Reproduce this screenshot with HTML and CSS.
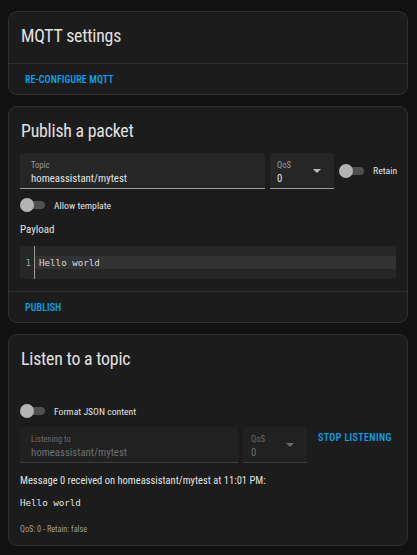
FILE: index.html
```html
<!DOCTYPE html>
<html>
<head>
<meta charset="utf-8">
<link rel="stylesheet" href="styles.css">
</head>
<body>
<div class="page">
  <div class="card">
    <div class="card-header first">MQTT settings</div>
    <div class="card-actions"><span class="btn">RE-CONFIGURE MQTT</span></div>
  </div>

  <div class="card">
    <div class="card-header">Publish a packet</div>
    <div class="card-content">
      <div class="field-row">
        <div class="field topic">
          <span class="label">Topic</span>
          <span class="value">homeassistant/mytest</span>
        </div>
        <div class="field qos">
          <span class="label">QoS</span>
          <span class="value">0</span>
          <span class="arrow"></span>
        </div>
        <span class="switch"><span class="thumb"></span></span>
        <span class="switch-label retain">Retain</span>
      </div>
      <div class="toggle-row">
        <span class="switch"><span class="thumb"></span></span>
        <span class="switch-label">Allow template</span>
      </div>
      <div class="payload-label">Payload</div>
      <div class="editor">
        <div class="gutter"><span class="ln">1</span></div>
        <div class="code"><div class="active-line">Hello world</div></div>
      </div>
    </div>
    <div class="card-actions"><span class="btn">PUBLISH</span></div>
  </div>

  <div class="card">
    <div class="card-header">Listen to a topic</div>
    <div class="card-content listen">
      <div class="toggle-row json">
        <span class="switch"><span class="thumb"></span></span>
        <span class="switch-label">Format JSON content</span>
      </div>
      <div class="field-row">
        <div class="field disabled listen-topic">
          <span class="label">Listening to</span>
          <span class="value">homeassistant/mytest</span>
        </div>
        <div class="field disabled qos2">
          <span class="label">QoS</span>
          <span class="value">0</span>
          <span class="arrow"></span>
        </div>
        <span class="btn stop">STOP LISTENING</span>
      </div>
      <div class="message">Message 0 received on homeassistant/mytest at 11:01 PM:</div>
      <div class="payload-out">Hello world</div>
      <div class="meta">QoS: 0 - Retain: false</div>
    </div>
  </div>
</div>
</body>
</html>
```

FILE: styles.css
```css
html, body {
  margin: 0;
  padding: 0;
  background: #111111;
  font-family: Roboto, "Noto Sans", sans-serif;
  font-stretch: 80%;
  color: #e1e1e1;
}
.page {
  padding: 11px 9px 0 8px;
  display: flex;
  flex-direction: column;
  gap: 11px;
}
.card {
  width: 400px;
  box-sizing: border-box;
  background: #1c1c1c;
  border: 1px solid #2f2f2f;
  border-radius: 9px;
}
.card-header {
  height: 46px;
  padding: 0 12px;
  display: flex;
  align-items: center;
  font-size: 17.8px;
  letter-spacing: -0.2px;
  color: #e1e1e1;
}
.card-header.first {
  height: 47px;
  padding-bottom: 4px;
}
.card-actions {
  border-top: 1px solid #2f2f2f;
  height: 30px;
  display: flex;
  align-items: center;
  padding: 0 16px;
}
.btn {
  color: #03a9f4;
  font-size: 10px;
  font-weight: 500;
  letter-spacing: 0.1px;
  white-space: nowrap;
}
.card-content {
  padding: 0 11px 12px 11px;
}
.field-row {
  display: flex;
  align-items: flex-start;
  gap: 5px;
}
.field {
  position: relative;
  flex: none;
  height: 35px;
  background: #262626;
  border-bottom: 1px solid #9a9a9a;
  border-radius: 3px 3px 0 0;
  padding: 0 11px;
  box-sizing: content-box;
  display: flex;
  flex-direction: column;
}
.field .label {
  font-size: 8.6px;
  color: #9e9e9e;
  margin-top: 7px;
  line-height: 11px;
}
.field .value {
  font-size: 10.8px;
  line-height: 15px;
  color: #e1e1e1;
}
.topic { width: 223px; }
.qos { width: 42px; padding-left: 7px; padding-right: 15px; }
.arrow {
  position: absolute;
  right: 13px;
  top: 16px;
  width: 0;
  height: 0;
  border-left: 4px solid transparent;
  border-right: 4px solid transparent;
  border-top: 4px solid #bdbdbd;
}
.switch {
  position: relative;
  width: 25px;
  height: 14px;
  flex: none;
  display: inline-block;
}
.switch::before {
  content: "";
  position: absolute;
  left: 5px;
  right: 0;
  top: 3px;
  height: 8px;
  border-radius: 4px;
  background: #4f4f4f;
}
.thumb {
  position: absolute;
  left: 0;
  top: 0;
  width: 14px;
  height: 14px;
  border-radius: 50%;
  background: #b4b4b4;
}
.field-row > .switch {
  margin-top: 11px;
}
.switch-label {
  font-size: 9.7px;
  color: #e1e1e1;
  white-space: nowrap;
}
.retain {
  margin-left: 4px;
  margin-top: 12px;
}
.toggle-row {
  height: 32px;
  display: flex;
  align-items: center;
  gap: 9px;
}
.payload-label {
  font-size: 11px;
  line-height: 18px;
  height: 18px;
}
.editor {
  margin-top: 7px;
  height: 33px;
  background: #262626;
  border-radius: 3px;
  display: flex;
}
.gutter {
  width: 14px;
  border-right: 1px solid #9a9a9a;
  position: relative;
}
.ln {
  position: absolute;
  right: 3px;
  top: 10px;
  font-family: "DejaVu Sans Mono", monospace;
  font-size: 9.2px;
  line-height: 13px;
  color: #a0a0a0;
}
.code {
  flex: 1;
  padding-top: 10px;
}
.active-line {
  background: #323232;
  height: 13px;
  line-height: 13px;
  padding-left: 4px;
  font-family: "DejaVu Sans Mono", monospace;
  font-size: 9.2px;
  color: #d8d8d8;
}
.listen {
  padding-top: 14px;
  padding-bottom: 10px;
}
.disabled {
  background: #212121;
  border-bottom-color: #3c3c3c;
}
.disabled .label { color: #6a6a6a; }
.disabled .value { color: #6e6e6e; }
.disabled .arrow { border-top-color: #6a6a6a; }
.listen-topic { width: 196px; }
.qos2 { width: 41px; padding-left: 8px; padding-right: 15px; }
.stop {
  margin-left: 6px;
  line-height: 22px;
  height: 22px;
  letter-spacing: 0.4px;
}
.message {
  margin-top: 10px;
  font-size: 10.5px;
  line-height: 16px;
  white-space: nowrap;
}
.payload-out {
  margin-top: 6px;
  font-family: "DejaVu Sans Mono", monospace;
  font-size: 9.2px;
  line-height: 16px;
  color: #e1e1e1;
}
.meta {
  margin-top: 12px;
  font-size: 8.2px;
  line-height: 12px;
  color: #9e9e9e;
}
```
